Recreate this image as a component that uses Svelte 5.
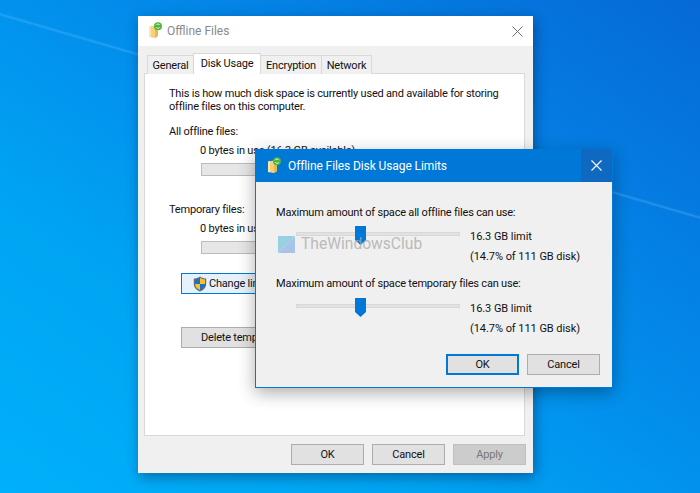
<script>
  const tabs = [
    { label: 'General', active: false },
    { label: 'Disk Usage', active: true },
    { label: 'Encryption', active: false },
    { label: 'Network', active: false }
  ];
  const limits = [
    'Maximum amount of space all offline files can use:',
    'Maximum amount of space temporary files can use:'
  ];
</script>

{#snippet folder(cls)}
  <svg class={cls} viewBox="0 0 18 18" aria-hidden="true">
    <path d="M2 4.5 L8 3.5 L11 5 L11 14 L8 16 L2 15 Z" fill="#f5d27a" />
    <path d="M2 4.5 L4 4.2 L4 15.3 L2 15 Z" fill="#fbe7a8" />
    <path d="M8 3.5 L11 5 L11 14 L8 16 Z" fill="#e6b954" />
    <circle cx="11" cy="4.2" r="4" fill="#4fb53a" />
    <path d="M9 3.2 A2.3 2.3 0 0 1 13 3.2 M13 5.2 A2.3 2.3 0 0 1 9 5.2" fill="none" stroke="#d8f2cc" stroke-width="1" />
  </svg>
{/snippet}

<div class="desktop">
  <section class="props">
    <header class="props-title">
      {@render folder('title-icon')}
      <span class="props-caption">Offline Files</span>
      <svg class="props-close" viewBox="0 0 11 11" aria-hidden="true">
        <path d="M0.5 0.5 L10.5 10.5 M10.5 0.5 L0.5 10.5" stroke="#6b6b6b" stroke-width="1" fill="none" />
      </svg>
    </header>

    <div class="body">
      <nav class="tabs">
        {#each tabs as tab}
          <div class="tab" class:active={tab.active}>{tab.label}</div>
        {/each}
      </nav>
      <div class="panel">
        <p class="intro">This is how much disk space is currently used and available for storing<br />offline files on this computer.</p>
        <p class="head first">All offline files:</p>
        <p class="usage">0 bytes in use (16.3 GB available)</p>
        <div class="bar"></div>
        <p class="head second">Temporary files:</p>
        <p class="usage">0 bytes in use (16.3 GB available)</p>
        <div class="bar"></div>
        <div class="btn change">
          <svg class="shield" viewBox="0 0 14 16" aria-hidden="true">
            <path d="M7 0.5 C5 2 3 2.6 0.8 2.6 L0.8 8 C0.8 11.5 3.5 14.3 7 15.6 C10.5 14.3 13.2 11.5 13.2 8 L13.2 2.6 C11 2.6 9 2 7 0.5 Z" fill="#5f6b78" />
            <path d="M7 1.8 C5.4 2.9 3.7 3.5 2 3.6 L2 8 L7 8 Z" fill="#1f6fc9" />
            <path d="M7 1.8 C8.6 2.9 10.3 3.5 12 3.6 L12 8 L7 8 Z" fill="#f6c12f" />
            <path d="M2 8 L7 8 L7 14.2 C4.2 13 2 10.8 2 8 Z" fill="#f6c12f" />
            <path d="M12 8 L7 8 L7 14.2 C9.8 13 12 10.8 12 8 Z" fill="#1f6fc9" />
          </svg>
          <span>Change limits...</span>
        </div>
        <div class="btn delete">Delete temporary files</div>
      </div>
      <footer class="actions">
        <div class="btn action">OK</div>
        <div class="btn action">Cancel</div>
        <div class="btn action disabled">Apply</div>
      </footer>
    </div>
  </section>

  <section class="limits">
    <header class="limits-title">
      {@render folder('title-icon')}
      <span class="limits-caption">Offline Files Disk Usage Limits</span>
      <div class="limits-close">
        <svg viewBox="0 0 11 11" aria-hidden="true">
          <path d="M0.5 0.5 L10.5 10.5 M10.5 0.5 L0.5 10.5" stroke="#fff" stroke-width="1.1" fill="none" />
        </svg>
      </div>
    </header>
    <div class="limits-body">
      {#each limits as label}
        <div class="limit">
          <p class="limit-label">{label}</p>
          <div class="limit-row">
            <div class="slider">
              <div class="track"></div>
              <svg class="thumb" viewBox="0 0 11 19" aria-hidden="true">
                <path d="M0 0 H11 V14 L5.5 19 L0 14 Z" fill="#0078d7" />
              </svg>
            </div>
            <div class="limit-values">
              <span>16.3 GB limit</span>
              <span>(14.7% of 111 GB disk)</span>
            </div>
          </div>
        </div>
      {/each}
      <footer class="limits-actions">
        <div class="btn dlg primary">OK</div>
        <div class="btn dlg">Cancel</div>
      </footer>
    </div>
  </section>

  <div class="watermark">
    <svg viewBox="0 0 18 17" aria-hidden="true">
      <path d="M0 0 H17 L0 17 Z" fill="#7cc4dc" />
      <path d="M17 0 V17 H0 Z" fill="#8fb4e6" />
    </svg>
    <span>TheWindowsClub</span>
  </div>
</div>

<style>
  :global(body) {
    margin: 0;
  }
  p {
    margin: 0;
  }
  .desktop {
    position: relative;
    width: 700px;
    height: 493px;
    overflow: hidden;
    font-family: Roboto, "Open Sans", sans-serif;
    font-size: 11px;
    letter-spacing: -0.2px;
    color: #111;
    background:
      linear-gradient(196.2deg, transparent 207px, rgba(110, 195, 255, 0.32) 209px, transparent 211px),
      linear-gradient(to bottom left, #0669d6 0%, #0292ee 50%, #00a4f2 70%, #00b0fa 100%);
  }

  .props {
    position: absolute;
    left: 138px;
    top: 16px;
    width: 395px;
    height: 457px;
    display: flex;
    flex-direction: column;
    background: #f0f0f0;
    box-shadow: 2px 4px 12px rgba(0, 30, 70, 0.45);
  }
  .props-title {
    height: 30px;
    flex: none;
    display: flex;
    align-items: center;
    padding: 0 10px 0 9px;
    background: #fff;
  }
  .title-icon {
    width: 18px;
    height: 18px;
    flex: none;
  }
  .props-caption {
    margin-left: 2px;
    font-size: 12px;
    letter-spacing: 0;
    color: #8a8a8a;
  }
  .props-close {
    width: 11px;
    height: 11px;
    margin-left: auto;
  }
  .body {
    flex: 1;
    display: flex;
    flex-direction: column;
    padding: 7px 8px 8px 6px;
    min-height: 0;
  }
  .tabs {
    display: flex;
    height: 21px;
    align-items: flex-end;
    padding-left: 3px;
    position: relative;
    z-index: 1;
    margin-bottom: -1px;
  }
  .tab {
    height: 19px;
    line-height: 19px;
    text-align: center;
    background: #f0f0f0;
    border: 1px solid #d9d9d9;
    border-bottom: none;
    margin-right: -1px;
    box-sizing: border-box;
    white-space: nowrap;
  }
  .tab:nth-child(1) {
    width: 47px;
  }
  .tab:nth-child(2) {
    width: 68px;
  }
  .tab:nth-child(3) {
    width: 62px;
  }
  .tab:nth-child(4) {
    width: 51px;
  }
  .tab.active {
    height: 21px;
    line-height: 19px;
    background: #fff;
    position: relative;
  }
  .panel {
    height: 363px;
    width: 381px;
    box-sizing: border-box;
    flex: none;
    background: #fff;
    border: 1px solid #d9d9d9;
    padding: 13px 0 0 24px;
  }
  .intro {
    line-height: 13px;
    white-space: nowrap;
  }
  .head {
    line-height: 15px;
  }
  .head.first {
    margin-top: 11px;
  }
  .head.second {
    margin-top: 26px;
  }
  .usage {
    margin: 4px 0 0 31px;
    line-height: 15px;
    white-space: nowrap;
  }
  .bar {
    width: 280px;
    height: 13px;
    margin: 5px 0 0 32px;
    box-sizing: border-box;
    background: #e6e6e6;
    border: 1px solid #bcbcbc;
  }
  .btn {
    box-sizing: border-box;
    height: 21px;
    display: flex;
    align-items: center;
    justify-content: center;
    background: #e1e1e1;
    border: 1px solid #adadad;
    white-space: nowrap;
  }
  .change {
    width: 150px;
    margin: 19px 0 0 12px;
    background: #e5f1fb;
    border-color: #0078d7;
    justify-content: flex-start;
    padding-left: 11px;
  }
  .shield {
    width: 14px;
    height: 16px;
    flex: none;
    margin-right: 2px;
  }
  .delete {
    width: 150px;
    margin: 33px 0 0 12px;
    justify-content: flex-start;
    padding-left: 19px;
  }
  .actions {
    display: flex;
    justify-content: flex-end;
    gap: 8px;
    margin-top: 8px;
    margin-right: -1px;
  }
  .action {
    width: 73px;
  }
  .disabled {
    background: #cccccc;
    border-color: #bfbfbf;
    color: #777;
  }

  .limits {
    position: absolute;
    left: 255px;
    top: 149px;
    width: 358px;
    height: 239px;
    box-sizing: border-box;
    display: flex;
    flex-direction: column;
    background: #f0f0f0;
    border: 1px solid #0078d7;
    border-top: none;
    box-shadow: 0 5px 16px rgba(0, 0, 0, 0.32);
  }
  .limits-title {
    height: 33px;
    flex: none;
    display: flex;
    align-items: center;
    padding-left: 10px;
    background: #0078d7;
    color: #fff;
  }
  .limits-caption {
    margin-left: 4px;
    font-size: 12px;
    letter-spacing: -0.1px;
  }
  .limits-close {
    width: 31px;
    height: 33px;
    margin-left: auto;
    background: #0f69c0;
    display: flex;
    align-items: center;
    justify-content: center;
  }
  .limits-close svg {
    width: 11px;
    height: 11px;
  }
  .limits-body {
    flex: 1;
    display: flex;
    flex-direction: column;
    padding: 23px 12px 0 20px;
  }
  .limit {
    height: 72px;
  }
  .limit-label {
    line-height: 15px;
    white-space: nowrap;
  }
  .limit-row {
    display: flex;
    margin-top: 6px;
  }
  .limit + .limit .limit-label {
    margin-top: -1px;
  }
  .limit + .limit .limit-row {
    margin-top: 7px;
  }
  .slider {
    position: relative;
    width: 194px;
    height: 19px;
    flex: none;
  }
  .track {
    position: absolute;
    left: 20px;
    top: 6px;
    width: 162px;
    height: 2px;
    background: #e2e2e2;
    border: 1px solid #d8d8d8;
  }
  .thumb {
    position: absolute;
    left: 79px;
    top: 0;
    width: 11px;
    height: 19px;
  }
  .limit-values {
    display: flex;
    flex-direction: column;
    gap: 5px;
    line-height: 15px;
    margin-top: 3px;
    white-space: nowrap;
    letter-spacing: -0.05px;
  }
  .limits-actions {
    display: flex;
    justify-content: flex-end;
    gap: 8px;
    margin-top: 5px;
  }
  .dlg {
    width: 73px;
  }
  .primary {
    border: 2px solid #0078d7;
  }

  .watermark {
    position: absolute;
    left: 278px;
    top: 235px;
    display: flex;
    align-items: center;
    gap: 5px;
    opacity: 0.75;
    color: #a9a9a9;
    font-size: 15.6px;
    letter-spacing: 0;
    pointer-events: none;
  }
  .watermark svg {
    width: 18px;
    height: 17px;
  }
</style>
